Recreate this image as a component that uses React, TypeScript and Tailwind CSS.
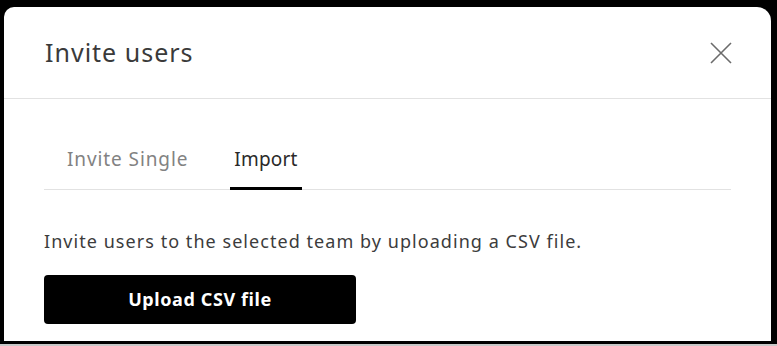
import React, { useState } from 'react'

const font = { fontFamily: '"Noto Sans", "Open Sans", Arial, sans-serif' }

function CloseIcon() {
  return (
    <svg width="24" height="24" viewBox="0 0 24 24" className="text-[#6b6b6b]">
      <path d="M2 2 L22 22 M22 2 L2 22" stroke="currentColor" strokeWidth="1.6" fill="none" />
    </svg>
  )
}

export default function App() {
  const [tab, setTab] = useState<'single' | 'import'>('import')

  return (
    <div className="w-[777px] h-[346px] flex flex-col bg-[#c8c8c8]" style={font}>
      <div className="flex-1 bg-black pt-[7px] pl-[4px] pr-[6px] pb-[3px] flex flex-col">
        <div className="flex-1 bg-white rounded-tl-[10px] rounded-tr-[14px] flex flex-col">
          <div className="h-[92px] flex items-center justify-between pl-[41px] pr-[38px] border-b border-[#e2e2e2]">
            <h1 className="text-[25px] tracking-[1px] text-[#3a3a3a] leading-none">Invite users</h1>
            <button className="p-0">
              <CloseIcon />
            </button>
          </div>
          <div className="px-[40px] pt-[48px]">
            <div className="flex border-b border-[#e2e2e2] pl-[23px] gap-[42px]">
              <button
                onClick={() => setTab('single')}
                className={
                  'pb-[16px] text-[19px] tracking-[0.9px] leading-[24px] border-b-[3px] -mb-px ' +
                  (tab === 'single' ? 'text-[#2a2a2a] border-black' : 'text-[#828282] border-transparent')
                }
              >
                Invite Single
              </button>
              <button
                onClick={() => setTab('import')}
                className={
                  'pb-[16px] px-[4px] text-[19px] tracking-[0.2px] leading-[24px] border-b-[3px] -mb-px ' +
                  (tab === 'import' ? 'text-[#2a2a2a] border-black' : 'text-[#828282] border-transparent')
                }
              >
                Import
              </button>
            </div>
            <p className="mt-[39px] text-[18px] tracking-[1.05px] leading-[24px] text-[#3c3c3c]">
              Invite users to the selected team by uploading a CSV file.
            </p>
            <button className="mt-[22px] w-[312px] h-[49px] bg-black rounded-[4px] text-white text-[18px] tracking-[0.6px] font-bold">
              Upload CSV file
            </button>
          </div>
        </div>
      </div>
      <div className="h-[2px]" />
    </div>
  )
}
